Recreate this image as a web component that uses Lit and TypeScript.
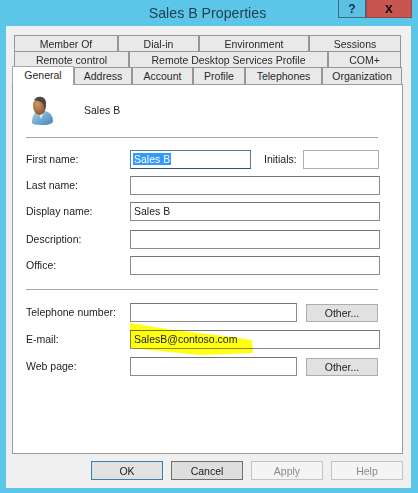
import { LitElement, html, css } from "lit";
import { customElement } from "lit/decorators.js";

const rows: [string, number][][] = [
  [["Member Of", 104], ["Dial-in", 81], ["Environment", 110], ["Sessions", 92]],
  [["Remote control", 115], ["Remote Desktop Services Profile", 199], ["COM+", 73]],
];
const front: [string, number][] = [
  ["Address", 58], ["Account", 61], ["Profile", 52], ["Telephones", 77], ["Organization", 80],
];

@customElement("app-root")
export class AppRoot extends LitElement {
  static styles = css`
    :host { display: block; width: 418px; height: 493px; font-family: "Liberation Sans", Arial, sans-serif; font-size: 10.5px; color: #222; }
    * { box-sizing: border-box; }
    .win { width: 418px; height: 493px; background: #5cc6e8; display: flex; flex-direction: column; padding: 0 7px 5px 6px; }
    .title { height: 26px; flex: none; display: flex; position: relative; justify-content: center; align-items: center; font-size: 14.2px; color: #22404f; padding-right: 2px; }
    .ctl { position: absolute; top: 0; height: 18px; display: flex; align-items: center; justify-content: center; font-weight: bold; color: #111; }
    .help { left: 332px; width: 28px; border: 1px solid #3d6c80; border-top: 0; background: #5cc0e2; font-size: 12px; color: #10294a; }
    .close { left: 360px; width: 46px; background: #c75650; border: 1px solid #8e4a48; border-top: 0; font-size: 14px; padding-bottom: 2px; }
    .body { flex: 1; background: #f0f0f0; padding: 9px 8px 0 6px; display: flex; flex-direction: column; }
    .tabrow { display: flex; padding-left: 2px; height: 16px; }
    .tab { display: flex; align-items: center; justify-content: center; background: #e9e9e9; border: 1px solid #969696; border-bottom: 0; white-space: nowrap; color: #2a2a2a; }
    .tabrow.last { height: 17px; padding-left: 0; position: relative; z-index: 1; }
    .tab.active { width: 62px; height: 19px; margin-top: -1px; background: #fff; border-color: #a8a8a8; padding-bottom: 3px; position: relative; z-index: 2; }
    .panel { width: 391px; height: 370px; background: #fff; border: 1px solid #9c9c9c; padding: 11px 13px 0 13px; flex: none; }
    .head { display: flex; height: 30px; align-items: center; margin-left: 4px; }
    .head svg { width: 24px; height: 30px; flex: none; }
    .head span { margin-left: 30px; margin-bottom: 2px; }
    .sep { height: 1px; background: #a6a6a6; width: 352px; }
    .sep.a { margin-top: 11px; margin-bottom: 12px; }
    .sep.b { margin-top: 14px; margin-bottom: 13px; }
    .row { display: flex; align-items: center; height: 19px; }
    .row + .row { margin-top: 8px; }
    .row.tight { margin-top: 7px; }
    .row.wide { margin-top: 9px; }
    .lab { width: 104px; flex: none; padding-bottom: 2px; }
    .inp { height: 19px; border: 1px solid #8c8c8c; border-top-color: #767676; background: #fff; display: flex; align-items: center; padding: 0 0 2px 2px; width: 250px; flex: none; position: relative; }
    .inp.first { width: 121px; border-color: #4a7ea6; border-bottom-color: #2b5577; }
    .inp.init { width: 76px; border-color: #adadad; }
    .inp.short { width: 167px; }
    .sel { background: #3399ff; color: #fff; padding: 0 1px; line-height: 12px; }
    .val { padding-left: 1px; }
    .initlab { width: 39px; margin-left: 13px; flex: none; padding-bottom: 2px; }
    .btn { height: 18px; width: 72px; flex: none; display: flex; align-items: center; justify-content: center; background: #e1e1e1; border: 1px solid #adadad; }
    .other { margin-left: 9px; }
    .mark { position: absolute; left: -3px; top: -10px; width: 127px; height: 36px; overflow: visible; pointer-events: none; mix-blend-mode: multiply; }
    .mailtext { position: relative; padding-left: 1px; }
    .foot { display: flex; justify-content: flex-end; gap: 8px; padding-top: 7px; width: 391px; }
    .foot .btn { height: 19px; }
    .ok { border-color: #3c7fb1; }
    .cancel { border-color: #707070; background: #dedede; }
    .off { background: #f4f4f4; border-color: #c4c4c4; color: #8a8a8a; }
  `;

  tabs() {
    return html`
      ${rows.map(r => html`<div class="tabrow">${r.map(([t, w]) => html`<div class="tab" style="width:${w}px">${t}</div>`)}</div>`)}
      <div class="tabrow last">
        <div class="tab active">General</div>
        ${front.map(([t, w]) => html`<div class="tab" style="width:${w}px">${t}</div>`)}
      </div>`;
  }

  render() {
    return html`<div class="win">
      <div class="title">Sales B Properties
        <div class="ctl help">?</div>
        <div class="ctl close">x</div>
      </div>
      <div class="body">
        ${this.tabs()}
        <div class="panel">
          <div class="head">
            <svg viewBox="0 0 24 30">
              <defs>
                <linearGradient id="sh" x1="0" y1="0" x2="1" y2="1"><stop offset="0" stop-color="#a9cfea"/><stop offset="1" stop-color="#4585ba"/></linearGradient>
                <radialGradient id="fc" cx=".35" cy=".4" r=".75"><stop offset="0" stop-color="#d39a68"/><stop offset="1" stop-color="#7b4a2a"/></radialGradient>
              </defs>
              <path d="M2 27c0-7 2-11 7-12h6c5 1 8 5 8 10 0 2-3 4-10 4-7 0-11-1-11-2z" fill="url(#sh)"/>
              <path d="M8 16l3 7 3-7z" fill="#e4eff7"/>
              <ellipse cx="9.500" cy="10" rx="6.500" ry="9" fill="url(#fc)"/>
              <path d="M4 4c2-3 5-4 8-3 3 1 4.500 4 4 8-.5 2-1 3-2 3 0-3-1-5-3-6-3-1-4.500-2-7-2z" fill="#4b4742"/>
            </svg>
            <span>Sales B</span>
          </div>
          <div class="sep a"></div>
          <div class="row"><div class="lab">First name:</div><div class="inp first"><span class="sel">Sales B</span></div><div class="initlab">Initials:</div><div class="inp init"></div></div>
          <div class="row tight"><div class="lab">Last name:</div><div class="inp"></div></div>
          <div class="row tight"><div class="lab">Display name:</div><div class="inp"><span class="val">Sales B</span></div></div>
          <div class="row wide"><div class="lab">Description:</div><div class="inp"></div></div>
          <div class="row tight"><div class="lab">Office:</div><div class="inp"></div></div>
          <div class="sep b"></div>
          <div class="row"><div class="lab">Telephone number:</div><div class="inp short"></div><div class="btn other">Other...</div></div>
          <div class="row"><div class="lab">E-mail:</div><div class="inp mail">
            <svg class="mark" viewBox="0 0 127 36"><path d="M2 2L45 9l60 7 19 3 1 13-53 2L2 27z" fill="#ffff14"/></svg>
            <span class="mailtext">SalesB@contoso.com</span></div></div>
          <div class="row"><div class="lab">Web page:</div><div class="inp short"></div><div class="btn other">Other...</div></div>
        </div>
        <div class="foot">
          <div class="btn ok">OK</div><div class="btn cancel">Cancel</div><div class="btn off">Apply</div><div class="btn off">Help</div>
        </div>
      </div>
    </div>`;
  }
}
